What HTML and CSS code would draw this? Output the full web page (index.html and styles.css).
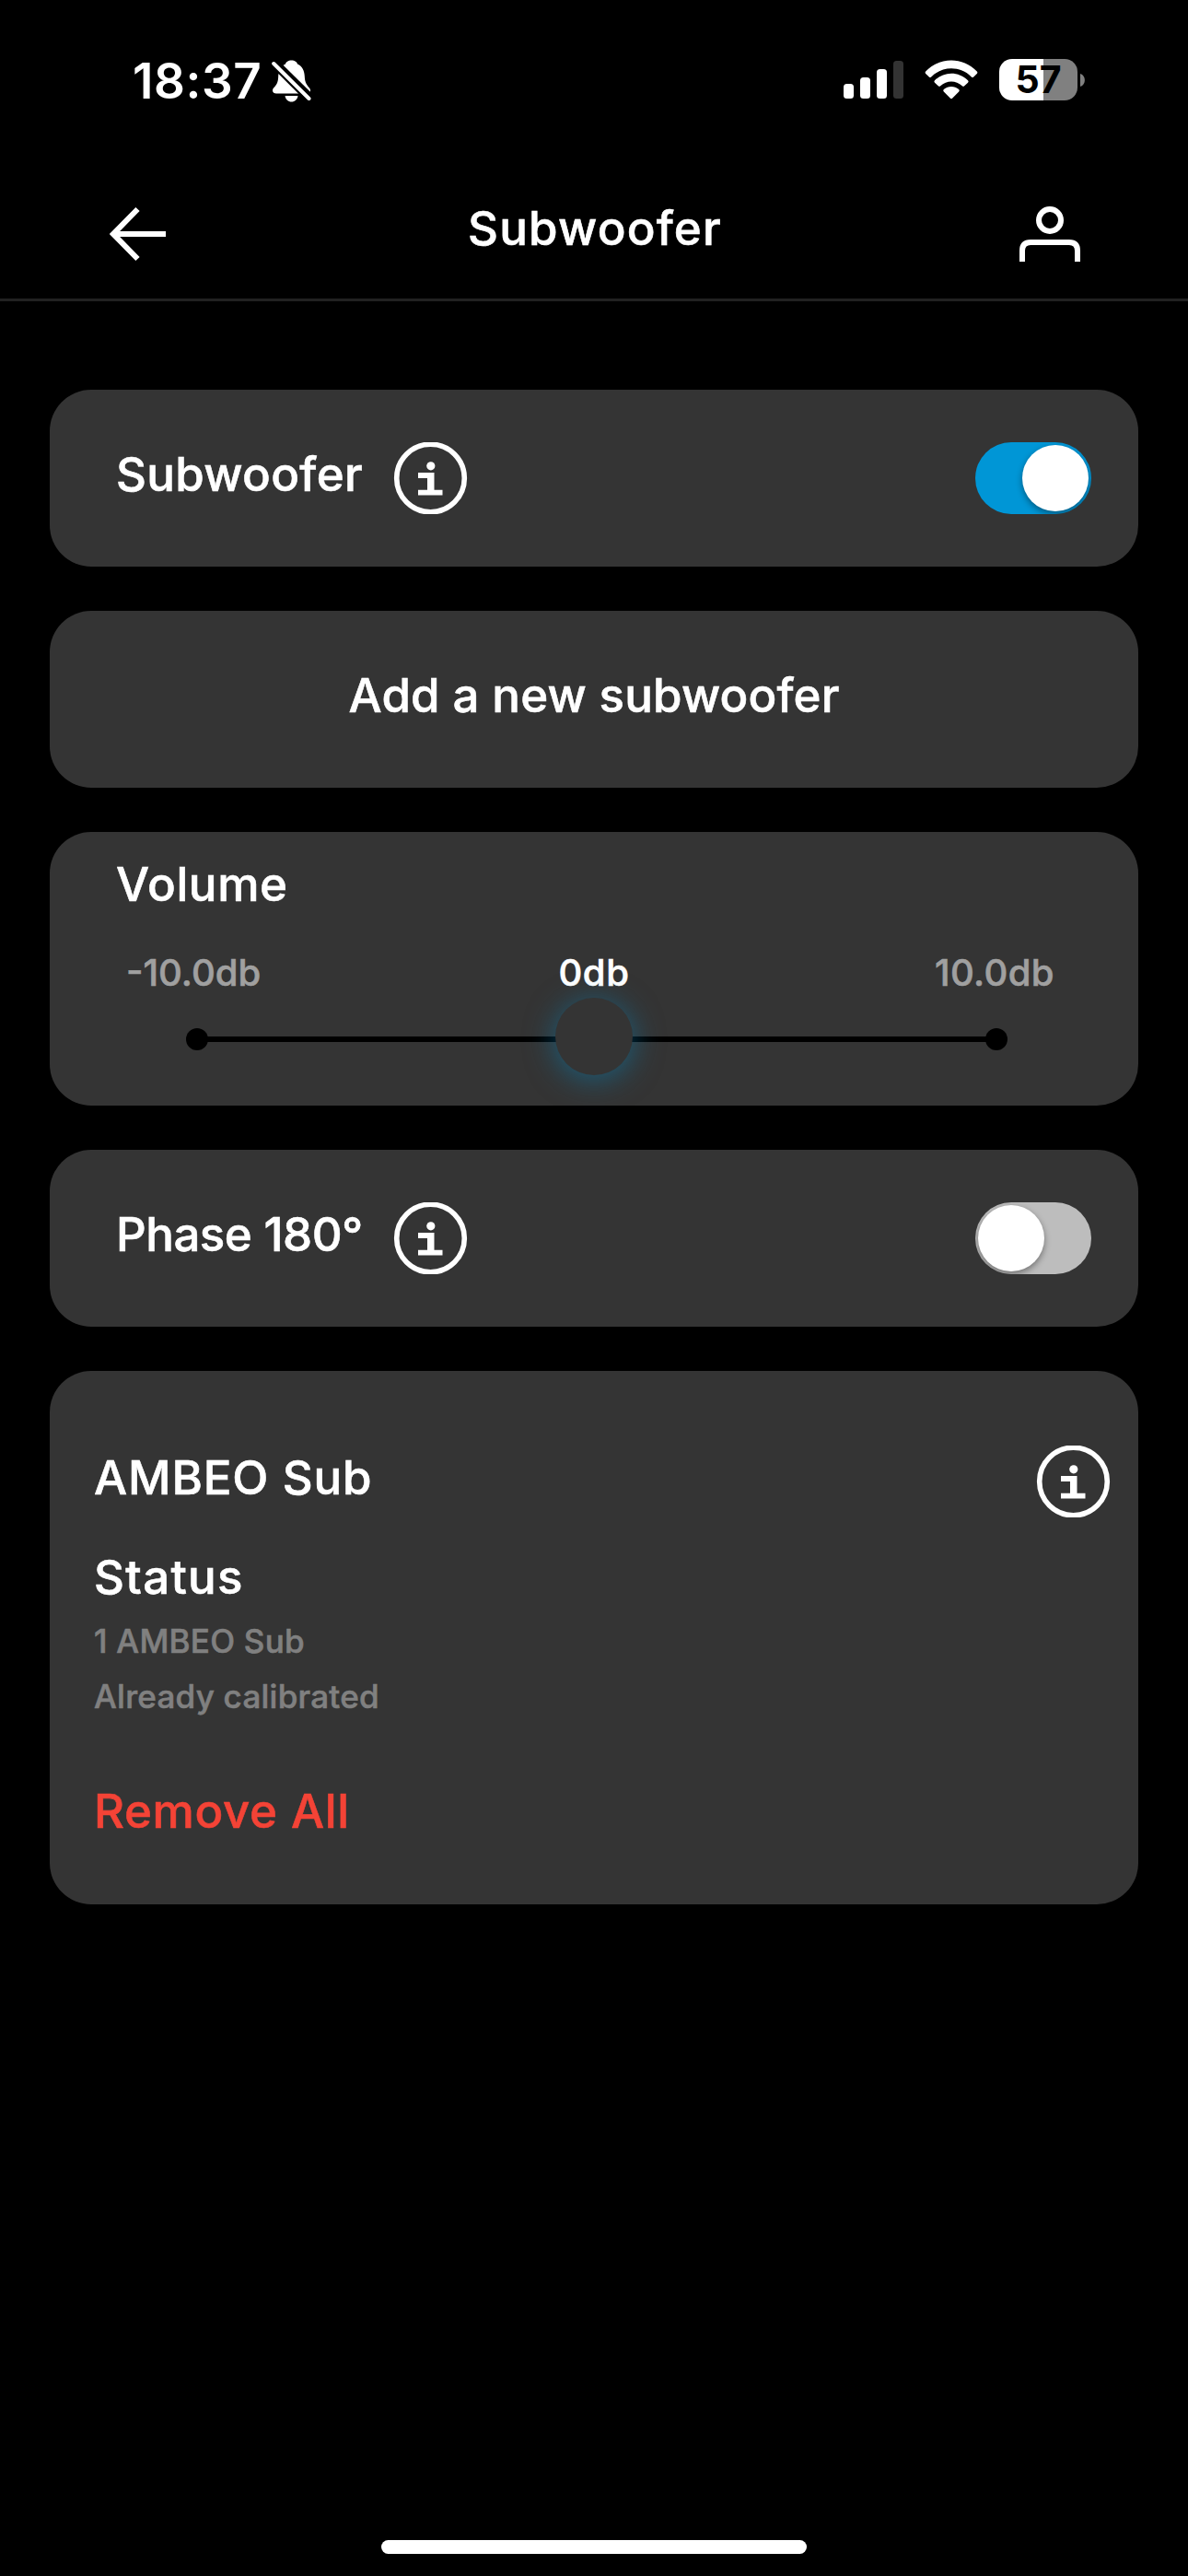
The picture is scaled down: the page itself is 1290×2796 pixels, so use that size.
FILE: index.html
```
<!DOCTYPE html>
<html lang="en">
<head>
    <meta charset="UTF-8">
    <meta name="viewport" content="width=device-width, initial-scale=1.0">
    <title>Subwoofer</title>
    <link rel="stylesheet" href="styles.css">
</head>
<body>

<svg width="0" height="0" class="sprite">
    <symbol id="info" viewBox="0 0 81 78">
        <circle cx="40.5" cy="39" r="36.8" fill="none" stroke="#fff" stroke-width="5.6"/>
        <circle cx="40.8" cy="25.8" r="4.6" fill="#fff"/>
        <path d="M27 33h17.500v18.700h9v5.800h-26.500v-5.800h10v-12.700h-10z" fill="#fff"/>
    </symbol>
</svg>

<div class="status-bar">
    <div class="status-left">
        <span class="time">18:37</span>
        <svg class="bell" width="44" height="46" viewBox="0 0 44 46">
            <path d="M21.5 0.5C25 0.5 27.600 2.200 28 4.500C33.500 7 35.600 12 35.800 18C36 25 38.500 27.500 41 30.500C43 33 42 36.500 38.500 36.500H5C1 36.500 0 33 2 30.500C5 27.500 7 25 7.200 18C7.400 12 9.500 7 15 4.500C15.400 2.200 18 0.500 21.500 0.500Z" fill="#fff"/>
            <path d="M14.500 39h14c-.6 4-3.500 6.500-7 6.500s-6.400-2.500-7-6.500z" fill="#fff"/>
            <path d="M4 0.500L44 40" stroke="#000" stroke-width="4.500"/>
            <path d="M2 4L40.500 42.500" stroke="#000" stroke-width="8"/>
            <path d="M2.200 4L40.500 42" stroke="#fff" stroke-width="4" stroke-linecap="round"/>
        </svg>
    </div>
    <div class="status-right">
        <svg width="65" height="41" viewBox="0 0 65 41">
            <rect x="0" y="25" width="11" height="16" rx="3.500" fill="#fff"/>
            <rect x="18" y="18" width="11" height="23" rx="3.500" fill="#fff"/>
            <rect x="36" y="9" width="11" height="32" rx="3.500" fill="#fff"/>
            <rect x="54" y="0" width="11" height="41" rx="3.500" fill="#333"/>
        </svg>
        <svg width="58" height="43" viewBox="0 0 58 43">
            <path d="M1.200 12.500C16.500-3.600 41.500-3.600 56.800 12.500Q58 13.800 56.800 15L53.200 18.400Q52 19.500 50.800 18.400C38.600 6.300 19.400 6.300 7.200 18.400Q6 19.500 4.800 18.400L1.200 15Q0 13.800 1.200 12.500Z" fill="#fff"/>
            <path d="M11 22.200C21 12.200 37 12.200 47 22.200Q48.200 23.500 47 24.700L43.200 28.300Q42 29.400 40.800 28.300C34 22 24 22 17.200 28.300Q16 29.400 14.800 28.300L11 24.700Q9.800 23.500 11 22.200Z" fill="#fff"/>
            <path d="M20.800 32C25.500 28 32.500 28 37.200 32Q38.400 33.200 37.200 34.400L30 41.700Q29 42.600 28 41.700L20.800 34.400Q19.600 33.200 20.800 32Z" fill="#fff"/>
        </svg>
        <div class="battery">
            <span class="battery-level">57</span>
            <svg width="5" height="14" viewBox="0 0 5 14"><path d="M0 0C6.500 2 6.500 12 0 14Z" fill="#808080"/></svg>
        </div>
    </div>
</div>

<header class="header">
    <svg class="header-icon" width="62" height="60" viewBox="0 0 62 60">
        <path d="M61 30H4M30.500 3L4 30L30.500 57" fill="none" stroke="#fff" stroke-width="6"/>
    </svg>
    <h1>Subwoofer</h1>
    <svg class="header-icon user" width="66" height="60" viewBox="0 0 66 60">
        <circle cx="33" cy="15" r="12" fill="none" stroke="#fff" stroke-width="6"/>
        <path d="M3 60V48Q3 39 12 39H54Q63 39 63 48V60" fill="none" stroke="#fff" stroke-width="6"/>
    </svg>
</header>

<main class="content">
    <div class="card row">
        <span class="label subwoofer">Subwoofer</span>
        <svg class="info"><use href="#info"/></svg>
        <div class="switch on"><div class="thumb"></div></div>
    </div>

    <div class="card add">
        <span class="label">Add a new subwoofer</span>
    </div>

    <div class="card volume">
        <span class="label">Volume</span>
        <div class="scale">
            <span>-10.0db</span>
            <span class="current">0db</span>
            <span class="max">10.0db</span>
        </div>
        <div class="slider">
            <div class="dot"></div>
            <div class="track"></div>
            <div class="dot"></div>
            <div class="knob"></div>
        </div>
    </div>

    <div class="card row">
        <span class="label phase">Phase 180°</span>
        <svg class="info"><use href="#info"/></svg>
        <div class="switch"><div class="thumb"></div></div>
    </div>

    <div class="card device">
        <div class="device-head">
            <span class="label">AMBEO Sub</span>
            <svg class="info"><use href="#info"/></svg>
        </div>
        <h2>Status</h2>
        <p>1 AMBEO Sub</p>
        <p>Already calibrated</p>
        <span class="remove">Remove All</span>
    </div>
</main>

<div class="home-bar"></div>

</body>
</html>
```
FILE: styles.css
```
* {
    box-sizing: border-box;
}

body {
    margin: 0;
    height: 2796px;
    display: flex;
    flex-direction: column;
    background-color: #000;
    color: #fff;
    font-family: Inter, "Liberation Sans", sans-serif;
    font-size: 51px;
    font-weight: 500;
    line-height: 60px;
}

svg {
    display: block;
    flex-shrink: 0;
}

.sprite {
    position: absolute;
}

/* status bar */
.status-bar {
    height: 176px;
    padding: 0 112px 0 144px;
    display: flex;
    justify-content: space-between;
    align-items: center;
}

.status-left, .status-right, .battery {
    display: flex;
    align-items: center;
}

.status-left {
    gap: 10px;
}

.status-right {
    gap: 23px;
    margin-bottom: 3px;
}

.time {
    font-size: 53px;
    font-weight: 600;
    letter-spacing: 0.6px;
}

.battery {
    gap: 3px;
}

.battery-level {
    width: 85px;
    height: 45px;
    border-radius: 14px;
    background: linear-gradient(to right, #fff 48px, #808080 48px);
    color: #000;
    font-size: 41px;
    font-weight: 700;
    line-height: 45px;
    text-align: center;
}

/* header */
.header {
    height: 151px;
    padding: 42px 117px 0 119px;
    display: grid;
    grid-template-columns: 1fr auto 1fr;
    align-items: start;
    border-bottom: 3px solid #212121;
}

.header h1 {
    margin: 0;
    font-size: 51px;
    font-weight: 500;
    letter-spacing: 1.2px;
}

.header h1, .card {
    -webkit-text-stroke: 0.6px currentColor;
}

.header-icon {
    margin-top: 6px;
}

.user {
    justify-self: end;
}

/* cards */
.content {
    flex: 1;
    padding: 96px 54px 0;
    display: flex;
    flex-direction: column;
    gap: 48px;
}

.card {
    background-color: #343434;
    border-radius: 45px;
}

.row {
    height: 192px;
    padding: 0 51px 0 72px;
    display: flex;
    align-items: center;
}

.row .label {
    width: 301px;
    margin-bottom: 9px;
    white-space: nowrap;
}

.subwoofer {
    letter-spacing: 0.33px;
}

.phase {
    letter-spacing: -0.5px;
}

.info {
    width: 81px;
    height: 78px;
}

.switch {
    width: 126px;
    height: 78px;
    margin-left: auto;
    padding: 3px;
    display: flex;
    border-radius: 39px;
    background-color: #bdbdbd;
    overflow: hidden;
}

.switch.on {
    justify-content: flex-end;
    background-color: #0096d6;
}

.thumb {
    width: 72px;
    height: 72px;
    border-radius: 50%;
    background-color: #fff;
    box-shadow: 0 3px 7px rgba(0, 0, 0, 0.4);
}

.add {
    height: 192px;
    display: flex;
    justify-content: center;
    align-items: center;
    letter-spacing: 0.15px;
}

.add .label {
    margin-bottom: 9px;
}

/* volume */
.volume {
    height: 297px;
    padding-top: 27px;
}

.volume .label {
    display: block;
    padding-left: 72px;
    letter-spacing: 0.6px;
}

.scale {
    margin-top: 42px;
    padding: 0 83px;
    display: grid;
    grid-template-columns: 1fr auto 1fr;
    color: #a0a0a0;
    font-size: 40px;
    line-height: 48px;
}

.current {
    color: #fff;
    letter-spacing: 0.6px;
}

.max {
    padding-right: 8px;
    text-align: right;
    letter-spacing: 0.4px;
}

.slider {
    position: relative;
    height: 24px;
    margin: 36px 142px 0 148px;
    display: flex;
    align-items: center;
}

.dot {
    width: 24px;
    height: 24px;
    border-radius: 50%;
    background-color: #000;
}

.track {
    flex: 1;
    height: 6px;
    margin: 0 -3px;
    background-color: #000;
}

.knob {
    position: absolute;
    left: 401px;
    top: -33px;
    width: 84px;
    height: 84px;
    border-radius: 50%;
    background-color: #343434;
    box-shadow: 0 4px 33px rgba(0, 140, 200, 0.5);
}

/* device */
.device {
    height: 579px;
    padding: 81px 30px 0 48px;
}

.device-head {
    display: flex;
    justify-content: space-between;
    align-items: center;
}

.device-head .label {
    margin-bottom: 9px;
    letter-spacing: 0.85px;
}

.device h2 {
    margin: 35px 0 9px;
    font-size: 51px;
    font-weight: 500;
    letter-spacing: 1.3px;
}

.device p {
    margin: 0;
    color: #808080;
    font-size: 35px;
    letter-spacing: 0.25px;
}

.remove {
    display: block;
    margin-top: 65px;
    color: #f44336;
    letter-spacing: 0.65px;
}

.home-bar {
    width: 462px;
    height: 15px;
    margin: 0 auto 24px;
    border-radius: 8px;
    background-color: #fff;
}
```
